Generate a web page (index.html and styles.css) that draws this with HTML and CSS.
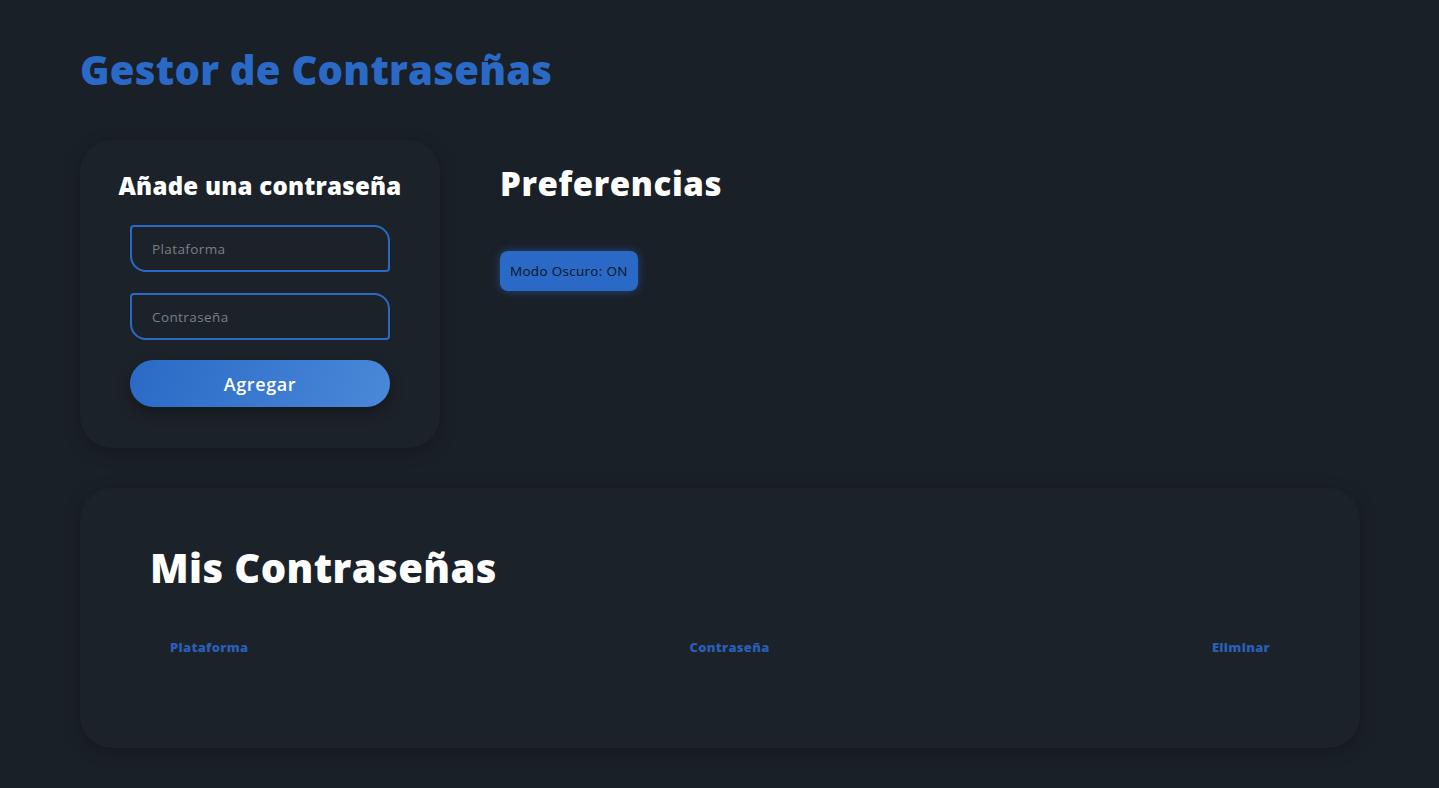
FILE: index.html
```html
<!DOCTYPE html>
<html lang="es">
<head>
<meta charset="utf-8">
<title>Gestor de Contraseñas</title>
<link rel="stylesheet" href="styles.css">
</head>
<body>
<main class="page">
  <h1 class="title">Gestor de Contraseñas</h1>
  <div class="top-row">
    <section class="card add-card">
      <h2 class="card-title">Añade una contraseña</h2>
      <form class="add-form">
        <input class="field" type="text" placeholder="Plataforma">
        <input class="field" type="password" placeholder="Contraseña">
        <button class="add-btn" type="button">Agregar</button>
      </form>
    </section>
    <section class="prefs">
      <h2 class="prefs-title">Preferencias</h2>
      <button class="mode-btn" type="button">Modo Oscuro: ON</button>
    </section>
  </div>
  <section class="card list-card">
    <h2 class="list-title">Mis Contraseñas</h2>
    <table class="pw-table">
      <thead>
        <tr>
          <th class="col-platform">Plataforma</th>
          <th class="col-password">Contraseña</th>
          <th class="col-delete">Eliminar</th>
        </tr>
      </thead>
      <tbody></tbody>
    </table>
  </section>
</main>
</body>
</html>
```

FILE: styles.css
```css
* { box-sizing: border-box; }
html, body { margin: 0; padding: 0; }
body {
  background: #1a2028;
  font-family: "Open Sans", "Liberation Sans", sans-serif;
  color: #ffffff;
  min-height: 788px;
}
.page {
  padding: 40px 80px 40px 80px;
  width: 1439px;
}
.title {
  margin: 0 0 40px 0;
  font-size: 40px;
  line-height: 60px;
  font-weight: 800;
  letter-spacing: 0.25px;
  color: #2a6ac6;
}
.top-row {
  display: flex;
  gap: 60px;
  align-items: flex-start;
}
.card {
  background: #1c2229;
  border-radius: 32px;
  box-shadow: 0 4px 18px rgba(0, 0, 0, 0.22);
}
.add-card {
  width: 360px;
  height: 308px;
  padding: 28px 50px 40px 50px;
  display: flex;
  flex-direction: column;
  align-items: center;
}
.card-title {
  margin: 0 0 21px 0;
  font-size: 24px;
  line-height: 36px;
  font-weight: 800;
  letter-spacing: 0.25px;
  color: #ffffff;
  text-align: center;
  white-space: nowrap;
}
.add-form {
  display: flex;
  flex-direction: column;
  gap: 21px;
  width: 260px;
}
.field {
  width: 260px;
  height: 47px;
  background: transparent;
  border: 2px solid #2a6ac6;
  border-radius: 4px 16px 4px 16px;
  padding: 0 20px;
  font-family: inherit;
  font-size: 13.5px;
  letter-spacing: 0.4px;
  color: #dddddd;
  outline: none;
}
.field::placeholder { color: #7a7f86; }
.add-btn {
  margin-top: -1px;
  height: 47px;
  width: 260px;
  border: none;
  border-radius: 24px;
  background: linear-gradient(110deg, #2a6ac6 0%, #4a88d8 100%);
  color: #ffffff;
  font-family: inherit;
  font-size: 18px;
  font-weight: 600;
  letter-spacing: 0.6px;
  box-shadow: 0 6px 14px rgba(0, 0, 0, 0.3);
  cursor: pointer;
}
.prefs {
  padding-top: 25px;
  display: flex;
  flex-direction: column;
  align-items: flex-start;
}
.prefs-title {
  margin: 0 0 48px 0;
  font-size: 33px;
  line-height: 38px;
  font-weight: 800;
  letter-spacing: 0.6px;
  color: #ffffff;
}
.mode-btn {
  height: 40px;
  padding: 0 10px;
  border: none;
  border-radius: 8px;
  background: #2a6ac6;
  color: #0d1420;
  font-family: inherit;
  font-size: 13.5px;
  letter-spacing: 0.3px;
  box-shadow: 0 0 8px rgba(42, 106, 198, 0.55);
  cursor: pointer;
}
.list-card {
  margin-top: 40px;
  width: 1280px;
  height: 260px;
  padding: 50px 70px;
}
.list-title {
  margin: 0 0 30px 0;
  font-size: 40px;
  line-height: 60px;
  font-weight: 800;
  letter-spacing: 0.4px;
  color: #ffffff;
}
.pw-table {
  width: 1140px;
  border-collapse: collapse;
}
.pw-table th {
  text-align: left;
  padding: 10px 20px;
  font-size: 13px;
  font-weight: 800;
  letter-spacing: 0.3px;
  color: #2a5eb6;
}
.col-platform { width: 520px; }
.col-password { width: 523px; }
```
